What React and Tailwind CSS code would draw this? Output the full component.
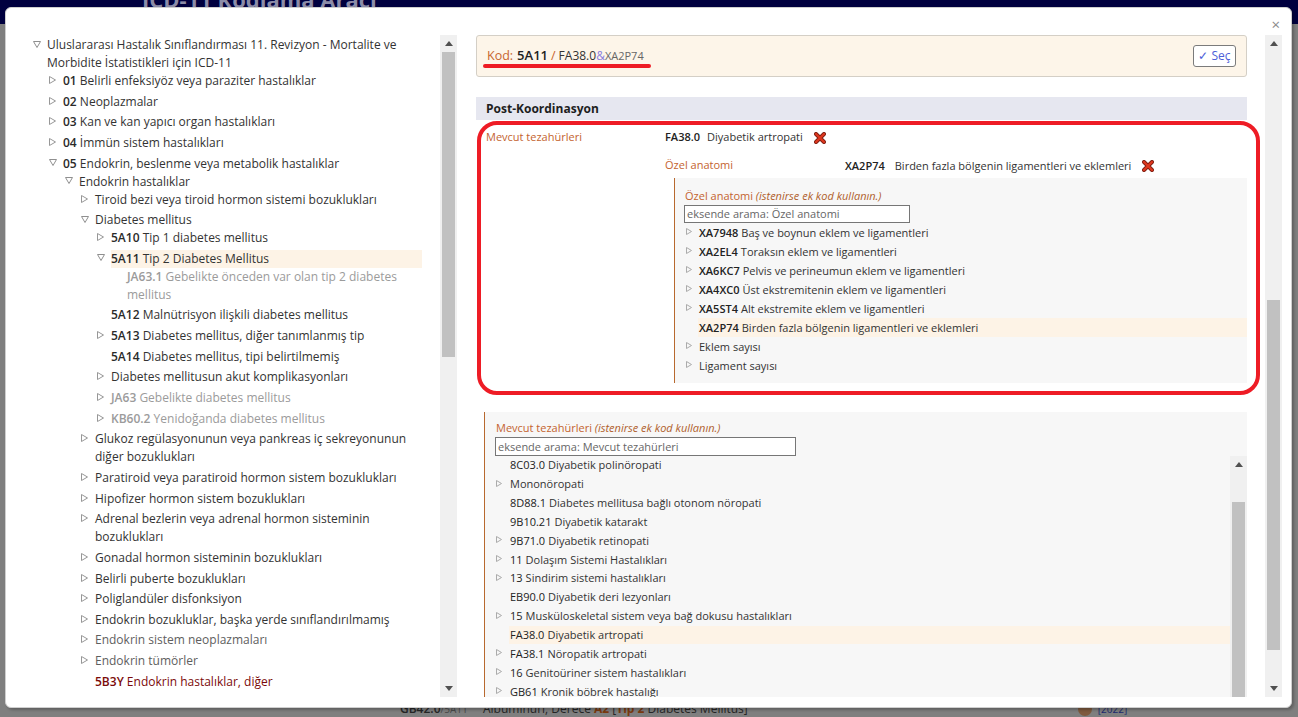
import React from "react";

const TREE = [
  { l: 0, s: "open", t: "Uluslararası Hastalık Sınıflandırması 11. Revizyon - Mortalite ve Morbidite İstatistikleri için ICD-11" },
  { l: 1, s: "closed", c: "01", t: "Belirli enfeksiyöz veya paraziter hastalıklar" },
  { l: 1, s: "closed", c: "02", t: "Neoplazmalar" },
  { l: 1, s: "closed", c: "03", t: "Kan ve kan yapıcı organ hastalıkları" },
  { l: 1, s: "closed", c: "04", t: "İmmün sistem hastalıkları" },
  { l: 1, s: "open", c: "05", t: "Endokrin, beslenme veya metabolik hastalıklar" },
  { l: 2, s: "open", t: "Endokrin hastalıklar" },
  { l: 3, s: "closed", t: "Tiroid bezi veya tiroid hormon sistemi bozuklukları" },
  { l: 3, s: "open", t: "Diabetes mellitus" },
  { l: 4, s: "closed", c: "5A10", t: "Tip 1 diabetes mellitus" },
  { l: 4, s: "open", c: "5A11", t: "Tip 2 Diabetes Mellitus", sel: true },
  { l: 5, s: "leaf", c: "JA63.1", t: "Gebelikte önceden var olan tip 2 diabetes mellitus", v: "gray" },
  { l: 4, s: "leaf", c: "5A12", t: "Malnütrisyon ilişkili diabetes mellitus" },
  { l: 4, s: "closed", c: "5A13", t: "Diabetes mellitus, diğer tanımlanmış tip" },
  { l: 4, s: "leaf", c: "5A14", t: "Diabetes mellitus, tipi belirtilmemiş" },
  { l: 4, s: "closed", t: "Diabetes mellitusun akut komplikasyonları" },
  { l: 4, s: "closed", c: "JA63", t: "Gebelikte diabetes mellitus", v: "gray" },
  { l: 4, s: "closed", c: "KB60.2", t: "Yenidoğanda diabetes mellitus", v: "gray" },
  { l: 3, s: "closed", t: "Glukoz regülasyonunun veya pankreas iç sekreyonunun diğer bozuklukları" },
  { l: 3, s: "closed", t: "Paratiroid veya paratiroid hormon sistem bozuklukları" },
  { l: 3, s: "closed", t: "Hipofizer hormon sistem bozuklukları" },
  { l: 3, s: "closed", t: "Adrenal bezlerin veya adrenal hormon sisteminin bozuklukları" },
  { l: 3, s: "closed", t: "Gonadal hormon sisteminin bozuklukları" },
  { l: 3, s: "closed", t: "Belirli puberte bozuklukları" },
  { l: 3, s: "closed", t: "Poliglandüler disfonksiyon" },
  { l: 3, s: "closed", t: "Endokrin bozukluklar, başka yerde sınıflandırılmamış" },
  { l: 3, s: "closed", t: "Endokrin sistem neoplazmaları", v: "muted" },
  { l: 3, s: "closed", t: "Endokrin tümörler", v: "muted" },
  { l: 3, s: "leaf", c: "5B3Y", t: "Endokrin hastalıklar, diğer", v: "maroon" },
];

const ANATOMY = [
  { c: "XA7948", t: "Baş ve boynun eklem ve ligamentleri", k: true },
  { c: "XA2EL4", t: "Toraksın eklem ve ligamentleri", k: true },
  { c: "XA6KC7", t: "Pelvis ve perineumun eklem ve ligamentleri", k: true },
  { c: "XA4XC0", t: "Üst ekstremitenin eklem ve ligamentleri", k: true },
  { c: "XA5ST4", t: "Alt ekstremite eklem ve ligamentleri", k: true },
  { c: "XA2P74", t: "Birden fazla bölgenin ligamentleri ve eklemleri", sel: true },
  { t: "Eklem sayısı", k: true },
  { t: "Ligament sayısı", k: true },
];

const MANIF = [
  { c: "8C03.0", t: "Diyabetik polinöropati" },
  { t: "Mononöropati", k: true },
  { c: "8D88.1", t: "Diabetes mellitusa bağlı otonom nöropati" },
  { c: "9B10.21", t: "Diyabetik katarakt" },
  { c: "9B71.0", t: "Diyabetik retinopati", k: true },
  { c: "11", t: "Dolaşım Sistemi Hastalıkları", k: true },
  { c: "13", t: "Sindirim sistemi hastalıkları", k: true },
  { c: "EB90.0", t: "Diyabetik deri lezyonları" },
  { c: "15", t: "Musküloskeletal sistem veya bağ dokusu hastalıkları", k: true },
  { c: "FA38.0", t: "Diyabetik artropati", sel: true },
  { c: "FA38.1", t: "Nöropatik artropati", k: true },
  { c: "16", t: "Genitoüriner sistem hastalıkları", k: true },
  { c: "GB61", t: "Kronik böbrek hastalığı", k: true },
];

const PAD = ["pl-[3px]", "pl-[19px]", "pl-[35px]", "pl-[51px]", "pl-[67px]", "pl-[83px]"];

function Tri({ open, small }) {
  if (open) {
    return (
      <svg width="8" height="7" viewBox="0 0 8 7" className="-mt-[2px]">
        <path d="M0.5 0.5H7.5L4 6.5Z" fill="none" stroke="#8f8f8f" strokeWidth="1" strokeLinejoin="round" />
      </svg>
    );
  }
  const w = small ? 6 : 7;
  const h = small ? 7 : 8;
  return (
    <svg width={w} height={h} viewBox={`0 0 ${w} ${h}`} className="-mt-[2px]">
      <path d={`M0.5 0.5V${h - 0.5}L${w - 0.5} ${h / 2}Z`} fill="none" stroke={small ? "#ababab" : "#979797"} strokeWidth="1" strokeLinejoin="round" />
    </svg>
  );
}

function RedX() {
  return (
    <svg width="12" height="12" viewBox="0 0 12 12">
      <path d="M2 2L10 10M10 2L2 10" stroke="#7d1e12" strokeWidth="4" strokeLinecap="round" />
      <path d="M2 2L10 10M10 2L2 10" stroke="#e0371e" strokeWidth="2.2" strokeLinecap="round" />
    </svg>
  );
}

function Arrow({ up }) {
  return (
    <div className="h-[17px] shrink-0 flex items-center justify-center">
      <svg width="8" height="5" viewBox="0 0 8 5">
        <path d={up ? "M0 5H8L4 0Z" : "M0 0H8L4 5Z"} fill="#505050" />
      </svg>
    </div>
  );
}

function Scrollbar({ gap, thumb, bottom = true }) {
  return (
    <div className="w-[17px] h-full bg-[#f0f0f0] flex flex-col shrink-0 overflow-hidden">
      <Arrow up />
      <div style={{ height: gap }} className="shrink-0" />
      <div style={{ height: thumb }} className="mx-[2px] bg-[#c1c1c1] shrink-0" />
      <div className="flex-1" />
      {bottom && <Arrow />}
    </div>
  );
}

function TreeRow({ item }) {
  const color =
    item.v === "gray" ? "text-[#9b9b9b]" :
    item.v === "muted" ? "text-[#5e5e5e]" :
    item.v === "maroon" ? "text-[#7b0a0a]" : "text-[#333]";
  const code =
    item.v === "gray" ? "text-[#9b9b9b]" :
    item.v === "maroon" ? "text-[#7b0a0a]" : "text-[#2a2a2a]";
  return (
    <div className={`flex ${PAD[item.l]} ${item.s === "open" ? "" : "pb-[2.65px]"}`}>
      <span className="w-[14px] h-[18px] shrink-0 flex items-center">
        {item.s !== "leaf" && <Tri open={item.s === "open"} />}
      </span>
      <span className={`flex-1 ${color} ${item.sel ? "bg-[#fdf3e6]" : ""}`}>
        {item.c && <span className={`font-semibold ${code}`}>{item.c} </span>}
        {item.t}
      </span>
    </div>
  );
}

export default function App() {
  return (
    <div className="relative h-[717px] w-full overflow-hidden bg-[#7f7f7f] font-['Open_Sans',sans-serif] flex flex-col">
      {/* page behind the dialog */}
      <div className="h-[24px] bg-[#00003f] flex items-start pl-[142px] gap-[2px] overflow-hidden shrink-0">
        <span className="-mt-[14px] text-[22px] font-bold text-[#8c8ca8] leading-[26px]">ICD-11 Kodlama Aracı</span>
        <span className="mt-[4px] text-[10px] text-[#8c8ca8]">2022-02</span>
      </div>
      <div className="flex-1" />
      <div className="h-[16px] flex items-center text-[12px] text-[#262626] shrink-0">
        <span className="pl-[400px] w-[483px] font-semibold">GB42.0<span className="font-normal text-[10px] text-[#4a4a4a]">/5A11</span></span>
        <span>Albuminüri, Derece <span className="font-bold text-[#7a3a10]">A2</span> [<span className="font-bold text-[#7a3a10]">Tip 2</span> Diabetes Mellitus]</span>
        <span className="ml-[330px] w-[14px] h-[14px] rounded-full bg-[#7e5a3e]" />
        <span className="ml-[6px] text-[10px] text-[#1d2a6e]">[2022]</span>
      </div>

      {/* dialog */}
      <div className="absolute left-[5px] top-[7px] w-[1287px] h-[701px] bg-white rounded-[6px] border border-[#cfcfcf] shadow-[2px_2px_3px_rgba(0,0,0,0.25)]">
        <button className="absolute right-[11px] top-[9px] text-[15px] leading-none text-[#8a8a8a]">×</button>

        <div className="flex h-[662px] mt-[27px] ml-[24px]">
          {/* tree */}
          <div className="w-[410px] pr-[18px] pt-[1px] text-[12px] leading-[18px] overflow-hidden shrink-0">
            {TREE.map((it, i) => (
              <TreeRow key={i} item={it} />
            ))}
          </div>
          <Scrollbar gap={0} thumb={305} />

          <div className="w-[19px] shrink-0" />

          {/* detail */}
          <div className="w-[771px] shrink-0 overflow-hidden text-[11px] leading-[16px] text-[#333]">
            <div className="h-[42px] bg-[#fdf5e9] border border-[#d4cfc6] rounded-[3px] flex items-center justify-between pl-[10px] pr-[10px]">
              <div className="flex items-baseline text-[12.5px] leading-[18px] mt-[-2px]">
                <span className="text-[#c8652f]">Kod:</span>
                <span className="ml-[4px] text-[13px] font-semibold text-[#222]">5A11</span>
                <span className="mx-[3px] text-[#c8652f]">/</span>
                <span className="text-[12px] text-[#333]">FA38.0</span>
                <span className="text-[12px] text-[#8c80e0]">&amp;</span>
                <span className="text-[11px] text-[#666]">XA2P74</span>
              </div>
              <button className="h-[22px] w-[43px] border border-[#7b7b7b] rounded-[3px] bg-white text-[12px] text-[#4c60d8] flex items-center justify-center">
                ✓ Seç
              </button>
            </div>

            <div className="mt-[20px] h-[23px] bg-[#e6e7f0] pl-[10px] flex items-center text-[12px] font-bold text-[#1e1e1e]">
              Post-Koordinasyon
            </div>

            <div className="pl-[10px] pt-[9px] flex">
              <div className="w-[179px] shrink-0 text-[#c4632f]">Mevcut tezahürleri</div>
              <div className="flex-1 flex flex-col">
                <div className="flex items-center h-[16px]">
                  <span className="font-semibold text-[#222]">FA38.0</span>
                  <span className="ml-[7px]">Diyabetik artropati</span>
                  <span className="ml-[11px] flex mt-[2px]"><RedX /></span>
                </div>
                <div className="flex mt-[12px] h-[16px]">
                  <span className="w-[180px] shrink-0 text-[#c4632f]">Özel anatomi</span>
                  <span className="flex items-center mt-[2px]">
                    <span className="font-semibold text-[#222]">XA2P74</span>
                    <span className="ml-[10px]">Birden fazla bölgenin ligamentleri ve eklemleri</span>
                    <span className="ml-[11px] flex"><RedX /></span>
                  </span>
                </div>
                <div className="mt-[5px] ml-[9px] border-l border-[#b8692f] bg-[#f7f7f7] pl-[10px] pt-[10px] pb-[8px]">
                  <div className="h-[17px] text-[#c4632f]">
                    Özel anatomi <span className="italic text-[#b0602c]">(istenirse ek kod kullanın.)</span>
                  </div>
                  <div className="w-[226px] h-[18px] -ml-px border border-[#767676] bg-white pl-[2px] flex items-center text-[#666]">
                    eksende arama: Özel anatomi
                  </div>
                  {ANATOMY.map((r, i) => (
                    <div key={i} className="flex h-[19px]">
                      <span className="w-[13px] shrink-0 flex items-center pl-[1px]">{r.k && <Tri small />}</span>
                      <span className={`flex-1 flex items-center pl-[1px] ${r.sel ? "bg-[#fdf3e6]" : ""}`}>
                        {r.c && <span className="font-semibold text-[#222] mr-[3px]">{r.c}</span>}
                        {r.t}
                      </span>
                    </div>
                  ))}
                </div>
              </div>
            </div>

            <div className="mt-[29px] ml-[8px] border-l border-[#b8692f] bg-[#f7f7f7] pt-[8px]">
              <div className="pl-[11px] h-[17px] text-[#c4632f]">
                Mevcut tezahürleri <span className="italic text-[#b0602c]">(istenirse ek kod kullanın.)</span>
              </div>
              <div className="ml-[10px] w-[301px] h-[19px] border border-[#767676] bg-white pl-[2px] flex items-center text-[#666]">
                eksende arama: Mevcut tezahürleri
              </div>
              <div className="flex h-[260px]">
                <div className="flex-1 pl-[11px]">
                  {MANIF.map((r, i) => (
                    <div key={i} className="flex h-[18.85px]">
                      <span className="w-[13px] shrink-0 flex items-center">{r.k && <Tri small />}</span>
                      <span className={`flex-1 flex items-center pl-[1px] ${r.sel ? "bg-[#fdf3e6]" : ""}`}>
                        {r.c && <span className="text-[#222] mr-[3px]">{r.c}</span>}
                        {r.t}
                      </span>
                    </div>
                  ))}
                </div>
                <Scrollbar gap={29} thumb={300} bottom={false} />
              </div>
            </div>
          </div>

          <div className="w-[18px] shrink-0" />
          <Scrollbar gap={248} thumb={350} />
        </div>

        {/* annotations */}
        <div className="absolute left-[477px] top-[56px] w-[168px] h-[3.5px] rounded-full bg-[#ee1c25]" />
        <div className="absolute left-[471px] top-[113px] w-[783px] h-[274px] rounded-[20px] border-4 border-[#ee1c25]" />
      </div>
    </div>
  );
}
